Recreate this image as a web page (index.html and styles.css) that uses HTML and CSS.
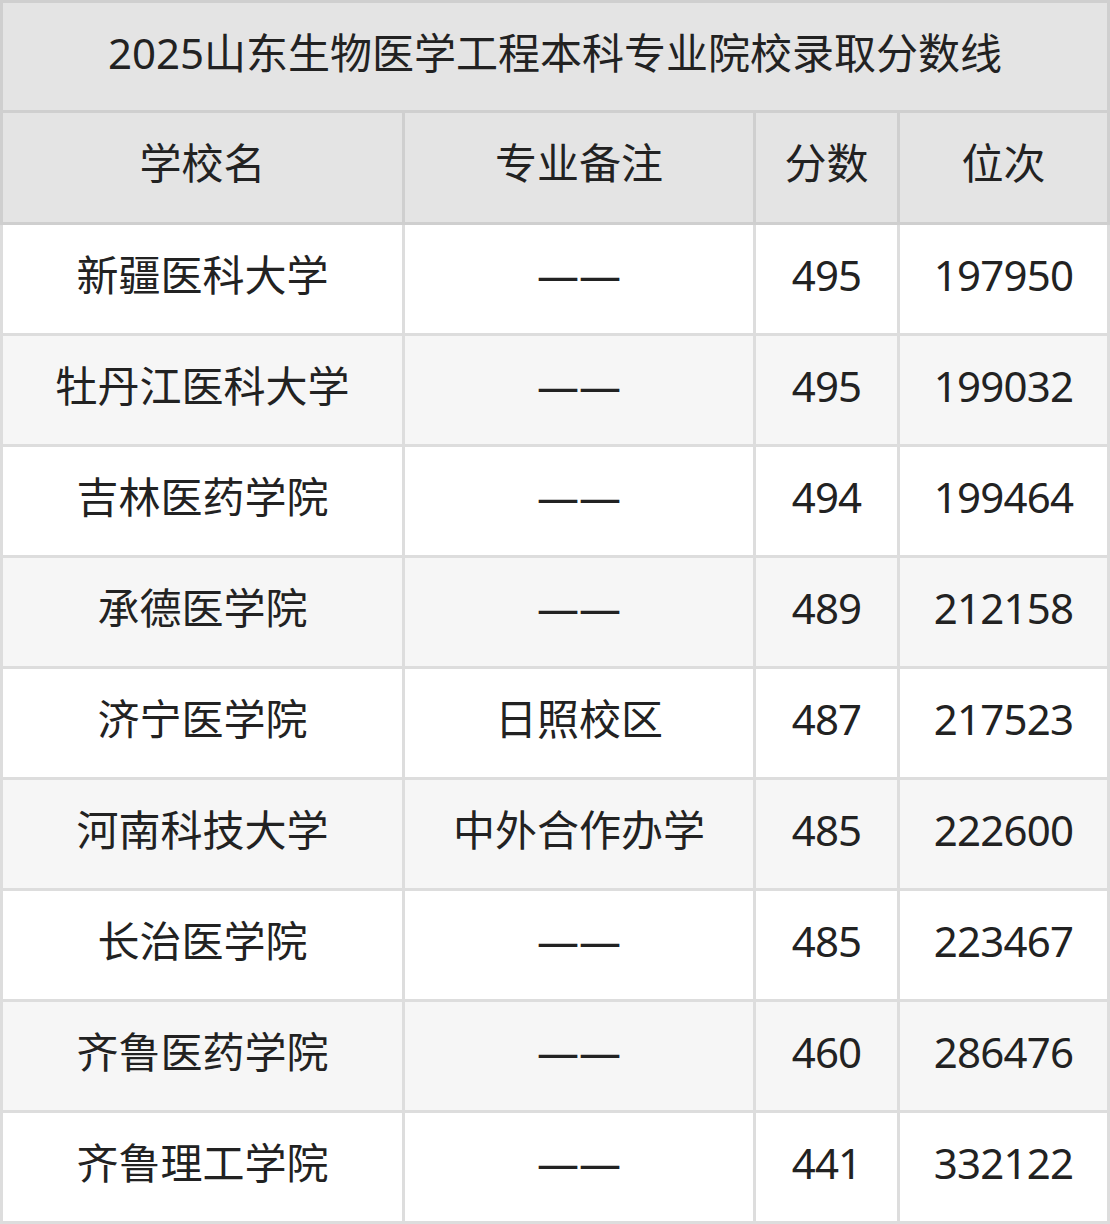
FILE: index.html
```html
<!DOCTYPE html>
<html lang="zh-CN">
<head>
<meta charset="utf-8">
<title>2025山东生物医学工程本科专业院校录取分数线</title>
<link rel="stylesheet" href="styles.css">
</head>
<body>
<div class="sheet">
  <div class="title">2025山东生物医学工程本科专业院校录取分数线</div>
  <div class="grid head">
    <div class="cell">学校名</div>
    <div class="cell">专业备注</div>
    <div class="cell">分数</div>
    <div class="cell">位次</div>
  </div>
  <div class="grid body">
    <div class="cell">新疆医科大学</div><div class="cell">——</div><div class="cell num">495</div><div class="cell num">197950</div>
    <div class="cell alt">牡丹江医科大学</div><div class="cell alt">——</div><div class="cell alt num">495</div><div class="cell alt num">199032</div>
    <div class="cell">吉林医药学院</div><div class="cell">——</div><div class="cell num">494</div><div class="cell num">199464</div>
    <div class="cell alt">承德医学院</div><div class="cell alt">——</div><div class="cell alt num">489</div><div class="cell alt num">212158</div>
    <div class="cell">济宁医学院</div><div class="cell">日照校区</div><div class="cell num">487</div><div class="cell num">217523</div>
    <div class="cell alt">河南科技大学</div><div class="cell alt">中外合作办学</div><div class="cell alt num">485</div><div class="cell alt num">222600</div>
    <div class="cell">长治医学院</div><div class="cell">——</div><div class="cell num">485</div><div class="cell num">223467</div>
    <div class="cell alt">齐鲁医药学院</div><div class="cell alt">——</div><div class="cell alt num">460</div><div class="cell alt num">286476</div>
    <div class="cell">齐鲁理工学院</div><div class="cell">——</div><div class="cell num">441</div><div class="cell num">332122</div>
  </div>
</div>
</body>
</html>
```

FILE: styles.css
```css
html, body {
  margin: 0;
  padding: 0;
  background: #ffffff;
}

.sheet {
  width: 1110px;
  font-family: "Noto Sans", "Noto Sans CJK SC", sans-serif;
  font-size: 42px;
  line-height: 1.2;
  color: #222222;
}

.title {
  height: 101px;
  padding-bottom: 6px;
  border: 3px solid #cfcfcf;
  background: #e4e4e4;
  display: flex;
  align-items: center;
  justify-content: center;
  white-space: nowrap;
  box-sizing: content-box;
}

.grid {
  display: grid;
  grid-template-columns: 399px 348px 141px 207px;
  column-gap: 3px;
  row-gap: 3px;
  padding: 0 3px 3px 3px;
}

.head {
  background: #cfcfcf;
  grid-auto-rows: 109px;
}

.head .cell {
  background: #e4e4e4;
}

.body {
  background: #dddddd;
  grid-auto-rows: 108px;
}

.cell {
  background: #ffffff;
  display: flex;
  align-items: center;
  justify-content: center;
  white-space: nowrap;
  padding-bottom: 8px;
}

.cell.alt {
  background: #f6f6f6;
}

.num {
  letter-spacing: -0.8px;
}
```
